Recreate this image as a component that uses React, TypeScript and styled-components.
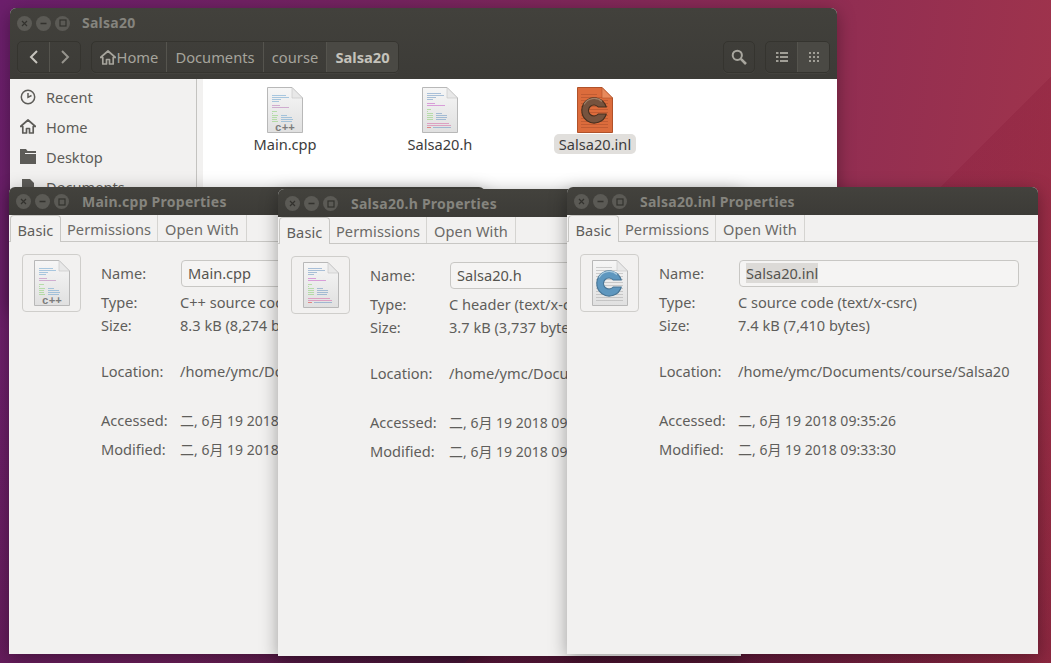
import React from "react";
import styled, { createGlobalStyle } from "styled-components";

const Global = createGlobalStyle`
  html, body { margin: 0; padding: 0; background: #4a1b3e; }
  body { font-family: "Noto Sans", "Noto Sans CJK SC", sans-serif; overflow: hidden; }
`;

const Desktop = styled.div`
  position: relative;
  width: 1051px;
  height: 663px;
  overflow: hidden;
  background:
    linear-gradient(135deg, transparent 0 65.8%, rgba(130, 20, 50, 0.22) 65.8%),
    radial-gradient(ellipse 420px 190px at 600px 690px, rgba(45, 15, 45, 0.75), transparent),
    linear-gradient(to bottom, transparent 55%, rgba(70, 15, 45, 0.22) 100%),
    linear-gradient(98deg, #6c1f6c 0%, #76245f 35%, #8b2b55 65%, #a3354a 100%);
`;

const Win = styled.div<{ $l: number; $t: number; $w: number; $h: number; $z: number }>`
  position: absolute;
  left: ${(p) => p.$l}px;
  top: ${(p) => p.$t}px;
  width: ${(p) => p.$w}px;
  height: ${(p) => p.$h}px;
  z-index: ${(p) => p.$z};
  display: flex;
  flex-direction: column;
  background: #f2f1f0;
  border-radius: 6px 6px 0 0;
  box-shadow: 0 4px 18px rgba(0, 0, 0, 0.35);
  overflow: hidden;
`;

const TitleBar = styled.div`
  flex: none;
  height: 28px;
  padding: 1px 0 0 7px;
  box-sizing: border-box;
  display: flex;
  align-items: center;
  background: linear-gradient(#43423d, #3c3b37);
`;

const Controls = styled.div`
  display: flex;
  gap: 4px;
  margin-right: 13px;
`;

const Ctl = styled.span`
  width: 15px;
  height: 15px;
  border-radius: 50%;
  background: #5b5a55;
  display: flex;
  align-items: center;
  justify-content: center;
  svg { display: block; }
`;

const Title = styled.span`
  font-size: 14px;
  font-weight: 700;
  color: #85847e;
  white-space: nowrap;
  letter-spacing: 0.25px;
`;

const Header = styled.div`
  flex: none;
  height: 71px;
  display: flex;
  flex-direction: column;
  background: linear-gradient(#42413c, #3c3b37);
`;

const HeaderTitle = styled.div`
  height: 33px;
  box-sizing: border-box;
  padding: 0 0 3px 7px;
  display: flex;
  align-items: center;
  ${Controls} { margin-right: 12px; }
  ${Title} { margin-top: -2px; }
`;

const Toolbar = styled.div`
  display: flex;
  align-items: flex-start;
  padding: 0 7px;
`;

const Group = styled.div<{ $mr?: number }>`
  display: flex;
  height: 32px;
  box-sizing: border-box;
  border: 1px solid #35342f;
  border-radius: 5px;
  margin-right: ${(p) => p.$mr ?? 0}px;
  box-shadow: 0 1px 0 rgba(255, 255, 255, 0.04);
  overflow: hidden;
`;

const Seg = styled.div<{ $w: number; $active?: boolean }>`
  width: ${(p) => p.$w}px;
  flex: none;
  box-sizing: border-box;
  display: flex;
  align-items: center;
  justify-content: center;
  gap: 1px;
  font-size: 14.7px;
  color: ${(p) => (p.$active ? "#c4c2bb" : "#a6a49c")};
  font-weight: ${(p) => (p.$active ? 700 : 400)};
  background: ${(p) => (p.$active ? "#4a4944" : "transparent")};
  border-left: 1px solid #55544e;
  &:first-child { border-left: 0; }
`;

const Spacer = styled.div`
  flex: 1;
`;

const FileBody = styled.div`
  flex: 1;
  display: flex;
  min-height: 0;
`;

const Sidebar = styled.div`
  flex: none;
  width: 187px;
  box-sizing: border-box;
  border-right: 1px solid #c4c3c0;
  padding-top: 3px;
  background: #f2f1f0;
`;

const SideRow = styled.div`
  height: 30px;
  display: flex;
  align-items: center;
  padding-left: 10px;
  gap: 10px;
  font-size: 14.6px;
  color: #5d5c58;
  padding-bottom: 1px;
  box-sizing: border-box;
`;

const Gutter = styled.div`
  flex: none;
  width: 6px;
  background: #f2f1f0;
`;

const Content = styled.div`
  flex: 1;
  background: #fff;
  padding-top: 8px;
  display: flex;
  align-items: flex-start;
`;

const Tile = styled.div<{ $w: number }>`
  width: ${(p) => p.$w}px;
  flex: none;
  display: flex;
  flex-direction: column;
  align-items: center;
`;

const TileLabel = styled.div<{ $sel?: boolean }>`
  margin-top: 1px;
  height: 20px;
  line-height: 20px;
  padding: 0 5px;
  border-radius: 5px;
  font-size: 14.6px;
  color: #3c3c3c;
  background: ${(p) => (p.$sel ? "#e1dfdc" : "transparent")};
`;

const Tabs = styled.div`
  flex: none;
  height: 27px;
  box-sizing: border-box;
  display: flex;
  padding-left: 1px;
  border-bottom: 1px solid #c8c7c4;
  background: #f2f1f0;
`;

const Tab = styled.div<{ $w: number; $active?: boolean }>`
  width: ${(p) => p.$w}px;
  flex: none;
  box-sizing: border-box;
  display: flex;
  align-items: center;
  justify-content: center;
  padding-top: 2px;
  font-size: 14.6px;
  letter-spacing: 0.1px;
  color: #6b6a67;
  height: ${(p) => (p.$active ? "27px" : "26px")};
  border-right: 1px solid #d5d4d1;
  ${(p) =>
    p.$active
      ? `border: 1px solid #c8c7c4; border-bottom: 0; border-radius: 4px 4px 0 0; background:#f2f1f0; color:#5f5e5b;`
      : ""}
`;

const Panel = styled.div`
  flex: 1;
  display: flex;
  padding: 12px 0 0 13px;
  gap: 20px;
  min-height: 0;
`;

const IconBtn = styled.div`
  flex: none;
  width: 59px;
  height: 58px;
  box-sizing: border-box;
  border: 1px solid #cfcecb;
  border-radius: 4px;
  display: flex;
  align-items: center;
  justify-content: center;
`;

const Form = styled.div`
  display: grid;
  grid-template-columns: 79px auto;
  grid-template-rows: 38px 20px 26px 66px 32px 26px;
  align-items: center;
  align-content: start;
  font-size: 14.6px;
  white-space: nowrap;
`;

const Label = styled.div`
  color: #5f5e5b;
`;

const Value = styled.div`
  color: #5f5e5b;
`;

const DateValue = styled(Value)`
  font-size: 14px;
`;

const Entry = styled.div`
  width: 280px;
  height: 27px;
  margin-left: 1px;
  box-sizing: border-box;
  border: 1px solid #c8c7c4;
  border-radius: 4px;
  padding: 0 6px;
  background: #f5f4f3;
  display: flex;
  align-items: center;
  color: #55544f;
`;

const Sel = styled.span<{ $on?: boolean }>`
  background: ${(p) => (p.$on ? "#dcdad7" : "transparent")};
`;

const G = "#a09e96";

const Chrome = () => (
  <Controls>
    <Ctl>
      <svg width="7" height="7" viewBox="0 0 7 7">
        <path d="M1 1l5 5M6 1L1 6" stroke="#33322e" strokeWidth="1.2" />
      </svg>
    </Ctl>
    <Ctl>
      <svg width="7" height="7" viewBox="0 0 7 7">
        <path d="M0.5 3.5h6" stroke="#33322e" strokeWidth="1.4" />
      </svg>
    </Ctl>
    <Ctl>
      <svg width="8" height="8" viewBox="0 0 8 8">
        <rect x="1" y="1" width="6" height="6" fill="none" stroke="#33322e" strokeWidth="1.2" />
      </svg>
    </Ctl>
  </Controls>
);

const Lines = ({ rows }: { rows: [number, number, number, string][] }) => (
  <g opacity="0.7">
    {rows.map(([x, y, w, c], i) => (
      <rect key={i} x={x} y={y} width={w} height="0.8" fill={c} />
    ))}
  </g>
);

const B = "#6fa6d0";
const P = "#b97cb9";
const N = "#8ed276";
const cppRows: [number, number, number, string][] = [
  [5, 8, 14, B], [5, 10, 17, B], [5, 12, 9, B], [5, 14, 7, B],
  [5, 18, 8, P], [5, 20, 17, P],
  [5, 24, 5, N], [5, 26, 1, N], [5, 28, 6, N], [5, 30, 5, N], [5, 32, 5, N], [5, 34, 6, N],
  [14, 28, 6, B], [14, 30, 11, B], [14, 32, 12, B], [14, 34, 11, B],
];
const H = "#6f98c4";
const hRows: [number, number, number, string][] = [
  [5, 6, 14, H], [5, 8, 17, H], [5, 10, 9, H], [5, 12, 6, H],
  [5, 16, 8, "#c860c8"], [5, 18, 18, "#c860c8"],
  [5, 22, 4, N], [5, 24, 1, N], [5, 26, 6, N], [5, 28, 6, N], [5, 30, 6, N], [5, 32, 6, N],
  [14, 26, 6, H], [14, 28, 11, H], [14, 30, 11, H], [14, 32, 10, H],
  [5, 36, 22, "#d86ca8"], [5, 38, 24, "#d86ca8"], [5, 40, 4, "#e03c3c"], [11, 40, 18, H],
];

const Sheet = ({ fill, children }: { fill?: string; children: React.ReactNode }) => (
  <svg width={36} height={46} viewBox="0 0 36 46">
    <defs>
      <linearGradient id="paper" x1="0" y1="0" x2="0" y2="1">
        <stop offset="0" stopColor="#f6f6f6" />
        <stop offset="1" stopColor="#e0e0e0" />
      </linearGradient>
    </defs>
    <path d="M0.5 0.5H25L35.5 11V45.5H0.5Z" fill={fill ?? "url(#paper)"} stroke={fill ? "#b0522a" : "#b8b8b8"} />
    {children}
    <path d="M25 0.5V11H35.5Z" fill={fill ? "#e88a5c" : "#e8e8e8"} stroke={fill ? "#b0522a" : "#c4c4c4"} strokeWidth="0.6" />
  </svg>
);

const CppIcon = () => (
  <Sheet>
    <Lines rows={cppRows} />
    <text x="18" y="43.5" textAnchor="middle" fontSize="11" fontWeight="700" fill="#7c7c7c" fontFamily="Liberation Mono, monospace">c++</text>
  </Sheet>
);

const HeaderIcon = () => (
  <Sheet>
    <Lines rows={hRows} />
  </Sheet>
);

const GreyLines = ({ color }: { color: string }) => (
  <g opacity="0.75">
    {[7, 10, 13, 16, 19, 22, 25, 28, 31, 34, 37, 40].map((y) => (
      <rect key={y} x="4" y={y} width={y === 7 ? 16 : 27} height="0.7" fill={color} />
    ))}
  </g>
);

const BigC = ({ main, dark, light }: { main: string; dark: string; light: string }) => (
  <g>
    <path
      d="M29.3 20A12.5 12.5 0 1 0 29.3 27H21.2A5.5 5.5 0 1 1 21.2 20Z"
      fill={main}
      stroke={dark}
      strokeWidth="1.1"
      strokeLinejoin="round"
    />
    <path d="M7 17.5A11.5 11.5 0 0 1 25 14.5" fill="none" stroke={light} strokeWidth="1.3" />
  </g>
);

const COrange = () => (
  <Sheet fill="#dc6c3c">
    <GreyLines color="#a8502c" />
    <BigC main="#76533e" dark="#46301f" light="#a08068" />
  </Sheet>
);

const CBlue = () => (
  <Sheet>
    <GreyLines color="#a9a9a9" />
    <BigC main="#5e97bf" dark="#467596" light="#a9cadf" />
  </Sheet>
);

const Clock = () => (
  <svg width="16" height="16" viewBox="0 0 16 16" fill="none" stroke="#5d5c58" strokeWidth="1.5">
    <circle cx="8" cy="8" r="6.7" />
    <path d="M8 4v4.3L11.5 6.5" />
  </svg>
);
const Home = ({ c = "#5d5c58" }: { c?: string }) => (
  <svg width="16" height="15" viewBox="0 0 16 15">
    <path d="M8 1L0.5 7.5h2.3V14h3.7V9.5h3V14h3.7V7.5h2.3Z" fill="none" stroke={c} strokeWidth="1.7" strokeLinejoin="round" />
  </svg>
);
const Folder = () => (
  <svg width="16" height="15" viewBox="0 0 16 15" fill="#5d5c58">
    <path d="M0 0h6l1.5 2H16v2H5v1h11v10H0Z" />
  </svg>
);
const DocGlyph = () => (
  <svg width="16" height="15" viewBox="0 0 16 15" fill="#5d5c58">
    <path d="M2 0h8l4 4v11H2Z" />
  </svg>
);

const Left = () => (
  <svg width="10" height="14" viewBox="0 0 10 14" fill="none" stroke="#c6c4bd" strokeWidth="2">
    <path d="M8 1L2 7l6 6" />
  </svg>
);
const Right = () => (
  <svg width="10" height="14" viewBox="0 0 10 14" fill="none" stroke="#96948d" strokeWidth="2">
    <path d="M2 1l6 6-6 6" />
  </svg>
);
const Search = () => (
  <svg width="16" height="16" viewBox="0 0 16 16" fill="none" stroke="#a8a69e" strokeWidth="2">
    <circle cx="6.3" cy="6.3" r="4.6" />
    <path d="M9.8 9.8L15 15" strokeWidth="2.6" />
  </svg>
);
const ListG = () => (
  <svg width="12" height="10" viewBox="0 0 12 10" fill={G}>
    {[0, 4, 8].map((y) => (
      <g key={y}>
        <rect x="0" y={y} width="2.5" height="2" />
        <rect x="4" y={y} width="8" height="2" />
      </g>
    ))}
  </svg>
);
const GridG = () => (
  <svg width="10" height="10" viewBox="0 0 10 10" fill={G}>
    {[0, 4, 8].map((y) =>
      [0, 4, 8].map((x) => <rect key={`${x}-${y}`} x={x} y={y} width="2" height="2" />)
    )}
  </svg>
);

type Props = {
  l: number; t: number; w: number; h: number; z: number;
  name: string; type: string; size: string; icon: React.ReactNode;
  accessed: string; modified: string; selected?: boolean;
};

const PropertiesWindow = ({ l, t, w, h, z, name, type, size, icon, accessed, modified, selected }: Props) => (
  <Win $l={l} $t={t} $w={w} $h={h} $z={z}>
    <TitleBar>
      <Chrome />
      <Title>{name} Properties</Title>
    </TitleBar>
    <Tabs>
      <Tab $w={51} $active>Basic</Tab>
      <Tab $w={97}>Permissions</Tab>
      <Tab $w={89}>Open With</Tab>
    </Tabs>
    <Panel>
      <IconBtn>{icon}</IconBtn>
      <Form>
        <Label>Name:</Label>
        <Entry><Sel $on={selected}>{name}</Sel></Entry>
        <Label>Type:</Label>
        <Value>{type}</Value>
        <Label>Size:</Label>
        <Value>{size}</Value>
        <Label>Location:</Label>
        <Value>/home/ymc/Documents/course/Salsa20</Value>
        <Label>Accessed:</Label>
        <DateValue>{accessed}</DateValue>
        <Label>Modified:</Label>
        <DateValue>{modified}</DateValue>
      </Form>
    </Panel>
  </Win>
);

export default function App() {
  return (
    <Desktop>
      <Global />
      <Win $l={10} $t={8} $w={827} $h={300} $z={1}>
        <Header>
          <HeaderTitle>
            <Chrome />
            <Title>Salsa20</Title>
          </HeaderTitle>
          <Toolbar>
            <Group $mr={10}>
              <Seg $w={31}><Left /></Seg>
              <Seg $w={31}><Right /></Seg>
            </Group>
            <Group>
              <Seg $w={74}><Home c="#a6a49c" />Home</Seg>
              <Seg $w={97}>Documents</Seg>
              <Seg $w={63}>course</Seg>
              <Seg $w={72} $active>Salsa20</Seg>
            </Group>
            <Spacer />
            <Group $mr={10}>
              <Seg $w={30}><Search /></Seg>
            </Group>
            <Group>
              <Seg $w={31}><ListG /></Seg>
              <Seg $w={32} $active><GridG /></Seg>
            </Group>
          </Toolbar>
        </Header>
        <FileBody>
          <Sidebar>
            <SideRow><Clock />Recent</SideRow>
            <SideRow><Home />Home</SideRow>
            <SideRow><Folder />Desktop</SideRow>
            <SideRow><DocGlyph />Documents</SideRow>
          </Sidebar>
          <Gutter />
          <Content>
            <Tile $w={164}>
              <CppIcon />
              <TileLabel>Main.cpp</TileLabel>
            </Tile>
            <Tile $w={146}>
              <HeaderIcon />
              <TileLabel>Salsa20.h</TileLabel>
            </Tile>
            <Tile $w={164}>
              <COrange />
              <TileLabel $sel>Salsa20.inl</TileLabel>
            </Tile>
          </Content>
        </FileBody>
      </Win>
      <PropertiesWindow
        l={9} t={187} w={476} h={467} z={2}
        name="Main.cpp" type="C++ source code (text/x-c++src)" size="8.3 kB (8,274 bytes)"
        icon={<CppIcon />} accessed="二, 6月 19 2018 09:35:26" modified="二, 6月 19 2018 09:33:30"
      />
      <PropertiesWindow
        l={278} t={189} w={463} h={467} z={3}
        name="Salsa20.h" type="C header (text/x-chdr)" size="3.7 kB (3,737 bytes)"
        icon={<HeaderIcon />} accessed="二, 6月 19 2018 09:35:26" modified="二, 6月 19 2018 09:33:30"
      />
      <PropertiesWindow
        l={567} t={187} w={471} h={467} z={4}
        name="Salsa20.inl" type="C source code (text/x-csrc)" size="7.4 kB (7,410 bytes)"
        icon={<CBlue />} accessed="二, 6月 19 2018 09:35:26" modified="二, 6月 19 2018 09:33:30" selected
      />
    </Desktop>
  );
}
